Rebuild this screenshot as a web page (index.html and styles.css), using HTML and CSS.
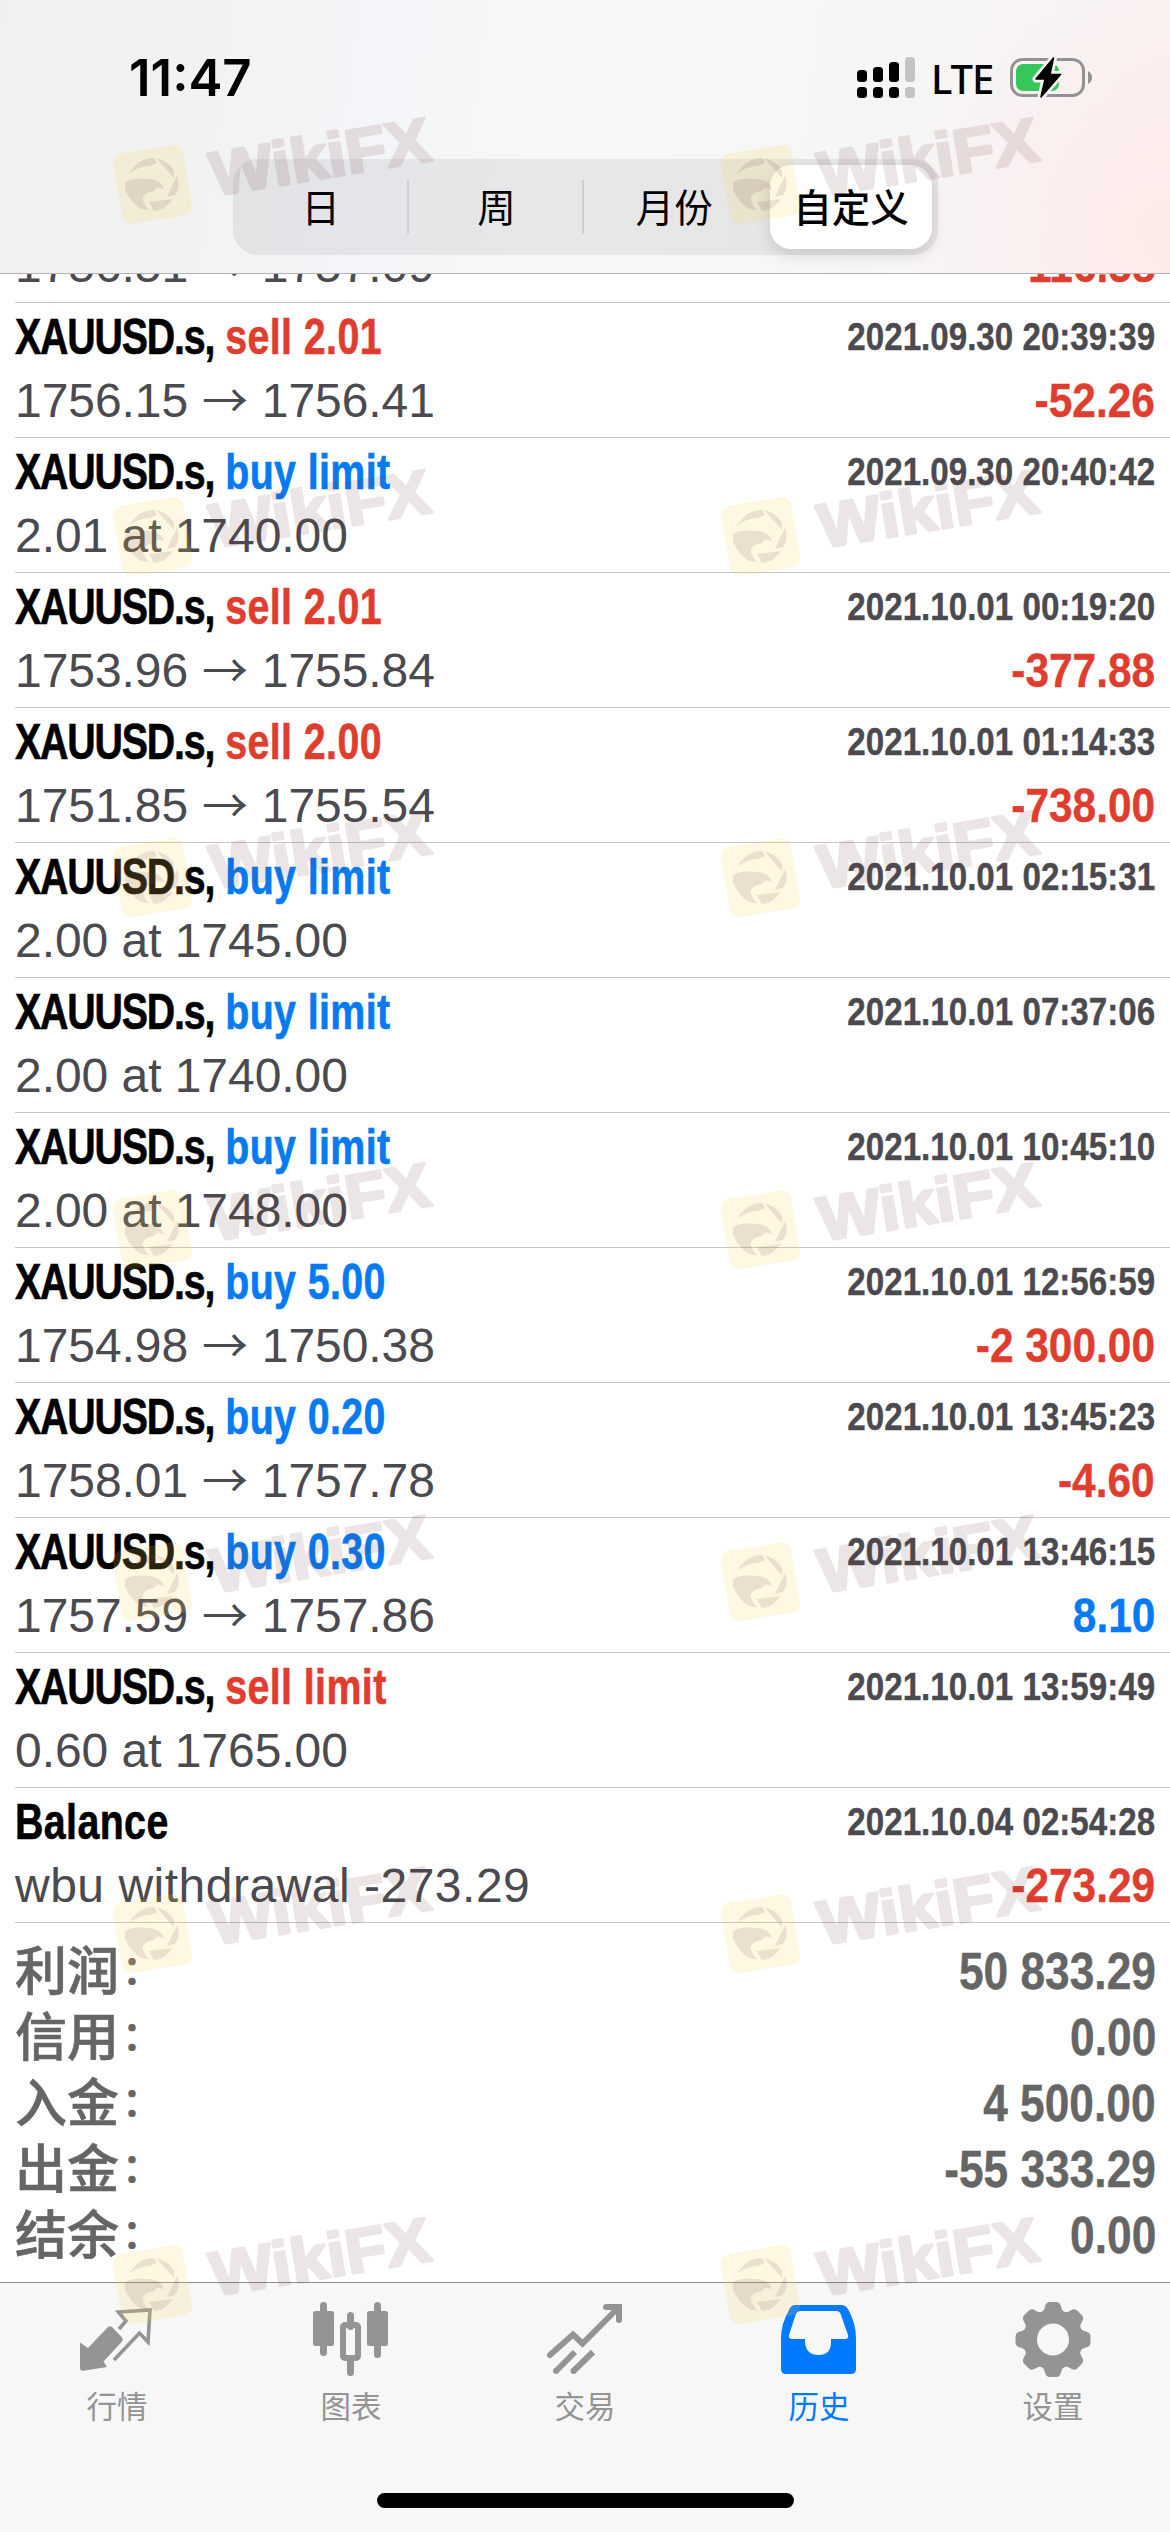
FILE: index.html
```html
<!DOCTYPE html>
<html lang="zh-Hans">
<head>
<meta charset="utf-8">
<title>历史</title>
<link rel="stylesheet" href="styles.css">
</head>
<body>
<div class="screen">
  <header class="header">
    <div class="status">
      <span class="time">11:47</span>
      <div class="status-right">
        <svg class="signal" width="58" height="42" viewBox="0 0 58 42">
          <g fill="#000"><rect x="0" y="13" width="10" height="12" rx="3.5"/><rect x="16" y="10" width="10" height="15" rx="3.5"/><rect x="32" y="5" width="10" height="20" rx="3.5"/><rect x="0" y="30" width="10" height="11" rx="3.5"/><rect x="16" y="30" width="10" height="11" rx="3.5"/><rect x="32" y="30" width="10" height="11" rx="3.5"/></g>
          <g fill="#c3c3c3"><rect x="48" y="0" width="10" height="25" rx="3.5"/><rect x="48" y="30" width="10" height="11" rx="3.5"/></g>
        </svg>
        <span class="network">LTE</span>
        <svg class="battery" width="84" height="44" viewBox="0 0 84 44">
          <rect x="1.5" y="3.5" width="72" height="36" rx="11" fill="none" stroke="#939293" stroke-width="3"/>
          <path d="M78 15 Q82 17 82 21.5 Q82 26 78 28Z" fill="#939293"/>
          <rect x="6" y="8" width="43" height="27" rx="7" fill="#35c759"/>
          <path d="M43.500 2 L26 23 H35 L31 41 L50.500 18.500 H40Z" fill="#000" stroke="#f8f3f3" stroke-width="7" stroke-linejoin="round"/>
          <path d="M43.500 2 L26 23 H35 L31 41 L50.500 18.500 H40Z" fill="#000" stroke="#000" stroke-width="1.500" stroke-linejoin="round"/>
        </svg>
      </div>
    </div>
    <nav class="segments">
      <span class="segment">日</span>
      <span class="segment">周</span>
      <span class="segment">月份</span>
      <span class="segment selected">自定义</span>
    </nav>
  </header>

  <main class="list">
    <article class="row"><div class="line"><h3><b>XAUUSD.s,</b> <span class="sell">sell 2.01</span></h3><time>2021.09.30 20:37:08</time></div><div class="line"><p>1756.51 <i>→</i> 1757.09</p><strong class="loss">-116.58</strong></div></article>
    <article class="row"><div class="line"><h3><b>XAUUSD.s,</b> <span class="sell">sell 2.01</span></h3><time>2021.09.30 20:39:39</time></div><div class="line"><p>1756.15 <i>→</i> 1756.41</p><strong class="loss">-52.26</strong></div></article>
    <article class="row"><div class="line"><h3><b>XAUUSD.s,</b> <span class="buy">buy limit</span></h3><time>2021.09.30 20:40:42</time></div><div class="line"><p>2.01 at 1740.00</p></div></article>
    <article class="row"><div class="line"><h3><b>XAUUSD.s,</b> <span class="sell">sell 2.01</span></h3><time>2021.10.01 00:19:20</time></div><div class="line"><p>1753.96 <i>→</i> 1755.84</p><strong class="loss">-377.88</strong></div></article>
    <article class="row"><div class="line"><h3><b>XAUUSD.s,</b> <span class="sell">sell 2.00</span></h3><time>2021.10.01 01:14:33</time></div><div class="line"><p>1751.85 <i>→</i> 1755.54</p><strong class="loss">-738.00</strong></div></article>
    <article class="row"><div class="line"><h3><b>XAUUSD.s,</b> <span class="buy">buy limit</span></h3><time>2021.10.01 02:15:31</time></div><div class="line"><p>2.00 at 1745.00</p></div></article>
    <article class="row"><div class="line"><h3><b>XAUUSD.s,</b> <span class="buy">buy limit</span></h3><time>2021.10.01 07:37:06</time></div><div class="line"><p>2.00 at 1740.00</p></div></article>
    <article class="row"><div class="line"><h3><b>XAUUSD.s,</b> <span class="buy">buy limit</span></h3><time>2021.10.01 10:45:10</time></div><div class="line"><p>2.00 at 1748.00</p></div></article>
    <article class="row"><div class="line"><h3><b>XAUUSD.s,</b> <span class="buy">buy 5.00</span></h3><time>2021.10.01 12:56:59</time></div><div class="line"><p>1754.98 <i>→</i> 1750.38</p><strong class="loss">-2 300.00</strong></div></article>
    <article class="row"><div class="line"><h3><b>XAUUSD.s,</b> <span class="buy">buy 0.20</span></h3><time>2021.10.01 13:45:23</time></div><div class="line"><p>1758.01 <i>→</i> 1757.78</p><strong class="loss">-4.60</strong></div></article>
    <article class="row"><div class="line"><h3><b>XAUUSD.s,</b> <span class="buy">buy 0.30</span></h3><time>2021.10.01 13:46:15</time></div><div class="line"><p>1757.59 <i>→</i> 1757.86</p><strong class="gain">8.10</strong></div></article>
    <article class="row"><div class="line"><h3><b>XAUUSD.s,</b> <span class="sell">sell limit</span></h3><time>2021.10.01 13:59:49</time></div><div class="line"><p>0.60 at 1765.00</p></div></article>
    <article class="row"><div class="line"><h3><span>Balance</span></h3><time>2021.10.04 02:54:28</time></div><div class="line"><p class="comment">wbu withdrawal -273.29</p><strong class="loss">-273.29</strong></div></article>
    <dl class="summary">
      <div><dt>利润<span>：</span></dt><dd>50 833.29</dd></div>
      <div><dt>信用<span>：</span></dt><dd>0.00</dd></div>
      <div><dt>入金<span>：</span></dt><dd>4 500.00</dd></div>
      <div><dt>出金<span>：</span></dt><dd>-55 333.29</dd></div>
      <div><dt>结余<span>：</span></dt><dd>0.00</dd></div>
    </dl>
  </main>

  <footer class="tabbar">
    <nav class="tabs">
      <a class="tab">
        <svg width="100" height="90" viewBox="7 0 100 90"><path d="M20 52.500V78Q20 81 23.500 80.800L47 77L43.500 71.500L62 51.500Q63.500 49.500 62 47.500L52 37Q50 35.500 48 37L28 58Z" fill="currentColor"/><path d="M59 39L66 31L58.500 22L90 20L88 52L79.500 43L54 70" fill="none" stroke="currentColor" stroke-width="3.600"/></svg>
        <span>行情</span>
      </a>
      <a class="tab">
        <svg width="100" height="90" viewBox="241 0 100 90" fill="currentColor"><rect x="260" y="12" width="7" height="54" rx="3.500"/><rect x="253" y="21" width="21" height="35" rx="2.500"/><rect x="287" y="22" width="7" height="18" rx="3.500"/><rect x="287" y="66" width="7" height="20" rx="3.500"/><rect x="283" y="35" width="15" height="33" rx="2" fill="none" stroke="currentColor" stroke-width="6"/><rect x="314" y="12" width="7" height="56" rx="3.500"/><rect x="307" y="21" width="21" height="35" rx="2.500"/></svg>
        <span>图表</span>
      </a>
      <a class="tab">
        <svg width="100" height="90" viewBox="15 0 100 90" fill="none" stroke="currentColor" stroke-width="6"><path d="M30 65L53 44.500L62.500 53.500L98 18" stroke-linecap="round"/><path d="M86 17H99V30" stroke-linecap="round"/><path d="M36 81L55 62M53.500 81L73 62"/><circle cx="36" cy="81" r="3" fill="currentColor" stroke="none"/><circle cx="53.500" cy="81" r="3" fill="currentColor" stroke="none"/></svg>
        <span>交易</span>
      </a>
      <a class="tab active">
        <svg width="100" height="90" viewBox="249 0 100 90"><path fill="currentColor" fill-rule="evenodd" d="M275 15H321Q326 15 328.500 20Q336 34 336 48V79Q336 84 331 84H266Q261 84 261 79V48Q261 34 269 20Q271 15 275 15ZM281 21Q277 21 275.500 25L269 45Q268.500 49 272 49H285V52Q286 65 298.500 65Q311 65 311 52V49H325Q329 49 328 45L321 25Q320 21 316 21Z"/></svg>
        <span>历史</span>
      </a>
      <a class="tab">
        <svg width="100" height="90" viewBox="-50 -49.500 100 90"><circle r="23" fill="none" stroke="currentColor" stroke-width="14"/><g fill="currentColor"><path id="tooth" d="M-13 -26Q-9 -28 -8 -33Q-7 -37.500 -3 -37.500H3Q7 -37.500 8 -33Q9 -28 13 -26Z"/><use href="#tooth" transform="rotate(45)"/><use href="#tooth" transform="rotate(90)"/><use href="#tooth" transform="rotate(135)"/><use href="#tooth" transform="rotate(180)"/><use href="#tooth" transform="rotate(225)"/><use href="#tooth" transform="rotate(270)"/><use href="#tooth" transform="rotate(315)"/></g></svg>
        <span>设置</span>
      </a>
    </nav>
    <div class="home-indicator"></div>
  </footer>

  <svg class="watermarks" width="1170" height="2532" viewBox="0 0 1170 2532">
    <defs>
      <g id="mark">
        <rect x="15" y="46" width="71" height="71" rx="9" transform="rotate(-9.500 50.500 81.500)" fill="#f8d24c" fill-opacity=".17"/>
        <g fill="#6b3c50" fill-opacity=".13">
          <path d="M23 80C27 75 38 75 46 76C54 76 61 80 62 87C58 84 54 84 52 88C45 89 40 92 41 97Q42 102 47 107Q38 107 33 101Q26 95 23 86Z"/>
          <path d="M27 71Q36 55 52 55L55 60L48 63Q36 63 27 71Z"/>
          <path d="M54 55Q68 59 72 68L72 75Z"/>
          <path d="M75 73Q79 83 73 92L65 94Z"/>
          <path d="M47 99L71 96Q62 108 52 108Z"/>
        </g>
        <text x="112" y="93" transform="rotate(-9.300 112 93)" textLength="222" lengthAdjust="spacingAndGlyphs" class="mark-text">WikiFX</text>
      </g>
    </defs>
    <use href="#mark" x="102" y="103"/><use href="#mark" x="710" y="103"/>
    <use href="#mark" x="102" y="455"/><use href="#mark" x="710" y="455"/>
    <use href="#mark" x="102" y="796"/><use href="#mark" x="710" y="796"/>
    <use href="#mark" x="102" y="1148"/><use href="#mark" x="710" y="1148"/>
    <use href="#mark" x="102" y="1500"/><use href="#mark" x="710" y="1500"/>
    <use href="#mark" x="102" y="1852"/><use href="#mark" x="710" y="1852"/>
    <use href="#mark" x="102" y="2203"/><use href="#mark" x="710" y="2203"/>
  </svg>
</div>
</body>
</html>
```
FILE: styles.css
```css
* { box-sizing: border-box; margin: 0; padding: 0; }

body {
  width: 1170px;
  background: #fff;
  font-family: "Liberation Sans", "Noto Sans CJK SC", sans-serif;
}

.screen {
  position: relative;
  width: 1170px;
  height: 2532px;
  display: flex;
  flex-direction: column;
  overflow: hidden;
}

/* Header */
.header {
  height: 274px;
  flex: none;
  border-bottom: 1px solid #b3b3b5;
  background:
    radial-gradient(ellipse 260px 260px at 1170px 230px, rgba(255, 228, 226, 0.55), rgba(255, 228, 226, 0)),
    linear-gradient(97deg, #f0f0f0 0%, #f2f2f2 18%, #f4f5f8 32%, #f7f7f7 48%, #f6f6f6 70%, #f8f4f4 86%, #faf1f0 100%);
}

.status {
  height: 159px;
  padding: 56px 76px 0 129px;
  display: flex;
  justify-content: space-between;
  align-items: flex-start;
}

.time {
  font: 600 51px/44px Inter, sans-serif;
  letter-spacing: 0;
}

.status-right { display: flex; align-items: flex-start; }
.signal { margin-top: 1px; }
.network { width: 79px; margin-left: 16px; font: 500 40px/46px "Noto Sans", sans-serif; letter-spacing: -1px; }

.segments {
  width: 705px;
  height: 96px;
  margin-left: 233px;
  display: flex;
  border-radius: 25px;
  background: rgba(118, 118, 122, 0.12);
}

.segment {
  flex: 1;
  display: flex;
  align-items: center;
  justify-content: center;
  padding-bottom: 4px;
  font: 400 38.5px/84px "Noto Sans CJK SC", sans-serif;
  background: linear-gradient(#cfcfd1, #cfcfd1) right 21px / 2px 54px no-repeat;
}

.segment:nth-child(3) { background: none; padding-left: 2px; }

.segment.selected {
  flex: none;
  width: 162px;
  margin: 6px 6px 6px 8px;
  border-radius: 21px;
  font-weight: 500;
  background: #fff;
  box-shadow: 0 6px 16px rgba(0, 0, 0, 0.13);
}

/* History list; scrolled so that its first row is cut by the header */
.list { flex: 1; overflow: hidden; min-height: 0; }

.row {
  height: 135px;
  margin-left: 15px;
  padding-right: 15px;
  border-bottom: 1px solid #c6c6c8;
}

.row:first-child { margin-top: -106px; }

.line { display: flex; justify-content: space-between; align-items: flex-start; white-space: nowrap; }

h3 {
  font-size: 50px;
  line-height: 68px;
  font-weight: 700;
  color: #000;
  -webkit-text-stroke: 0.6px currentColor;
  transform: scaleX(0.787);
  transform-origin: left;
}

h3 b { letter-spacing: -1.5px; }
h3 span { letter-spacing: 0.5px; -webkit-text-stroke-color: currentColor; }

time {
  font-size: 39px;
  line-height: 67px;
  font-weight: 700;
  color: #4b4a4f;
  -webkit-text-stroke: 0.4px currentColor;
  transform: scaleX(0.85);
  transform-origin: right;
}

.row p { font-size: 48px; line-height: 59px; color: #4b4a4f; letter-spacing: -0.05px; }
.row p.comment { letter-spacing: 0.5px; }

.row i {
  display: inline-block;
  width: 47px;
  font: 400 46px/40px "Noto Sans CJK SC", sans-serif;
  text-align: center;
}

strong {
  font-size: 49px;
  line-height: 59px;
  -webkit-text-stroke: 0.4px currentColor;
  transform: scaleX(0.866);
  transform-origin: right;
}

.sell, .loss { color: #df3d2e; }
.buy, .gain { color: #067af0; }

.summary { padding: 15px 14px 0 15px; font-weight: 700; color: #656565; }
.summary div { height: 66px; display: flex; justify-content: space-between; align-items: flex-start; }
dt { font: 500 52px/59px "Noto Sans CJK SC", sans-serif; -webkit-text-stroke: 0.6px #656565; }
dt span { display: inline-block; font-size: 40px; line-height: 40px; transform: translate(3px, -6px); }
dd { font-size: 51px; line-height: 67px; -webkit-text-stroke: 0.4px currentColor; transform: scaleX(0.868); transform-origin: right; }

/* Tab bar */
.tabbar {
  flex: none;
  height: 250px;
  border-top: 1px solid #8d8d90;
  background: #f7f7f7;
}

.tabs { display: flex; padding-top: 7px; }

.tab {
  flex: 1;
  display: flex;
  flex-direction: column;
  align-items: center;
  color: #949494;
  font: 400 30.5px/36px "Noto Sans CJK SC", sans-serif;
}

.tab span { margin-top: 7px; }
.tab.active { color: #007aff; }
.home-indicator { width: 417px; height: 15px; margin: 70px auto 0; border-radius: 8px; background: #000; }

/* Watermark layer over the whole screen */
.watermarks { position: absolute; left: 0; top: 0; pointer-events: none; }

.mark-text {
  font: 700 62px "Liberation Sans", sans-serif;
  fill: #693232;
  stroke: #693232;
  stroke-width: 3px;
  stroke-linejoin: round;
  opacity: 0.12;
}
```
